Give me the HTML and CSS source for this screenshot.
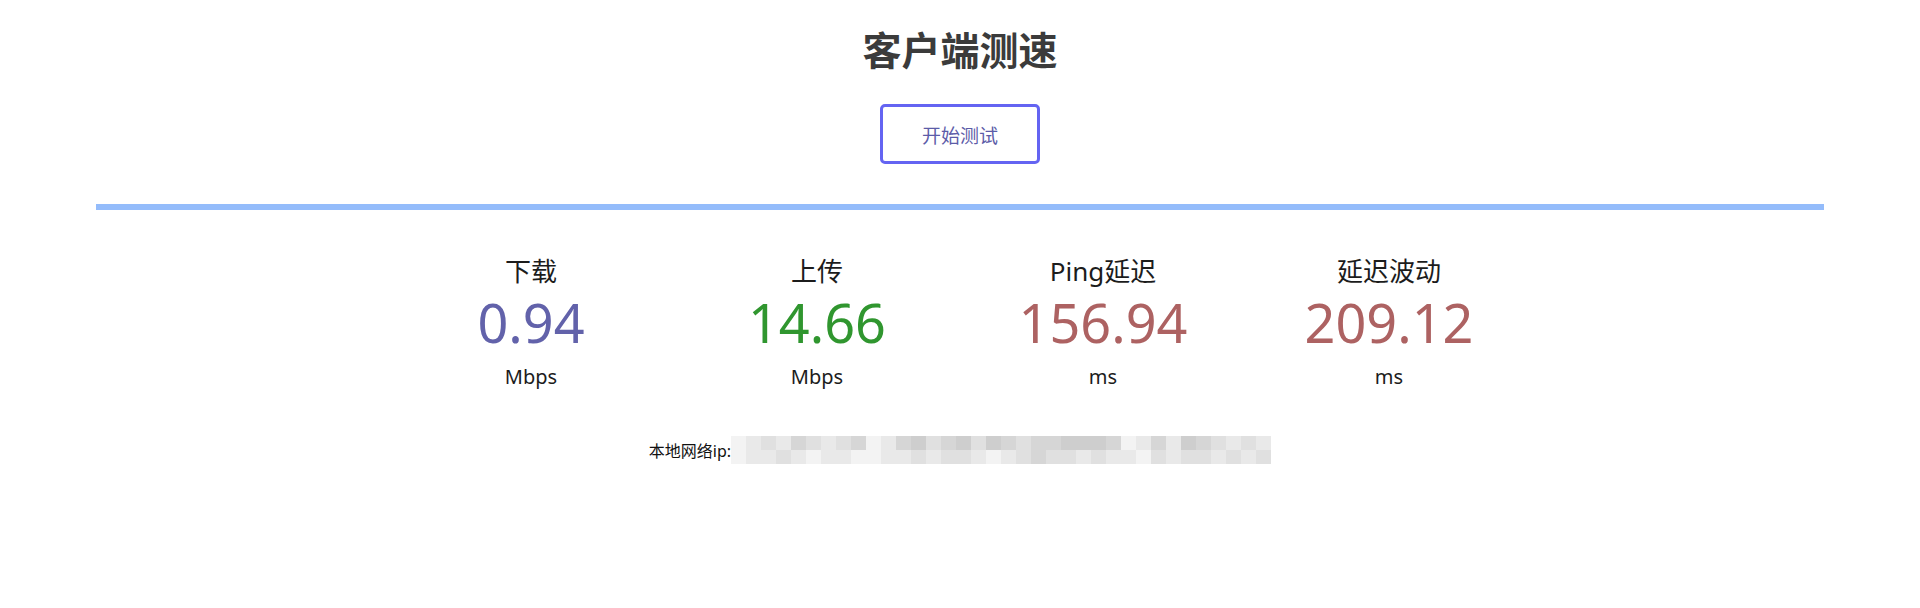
FILE: index.html
```html
<!DOCTYPE html>
<html>
<head>
    <meta charset="utf-8">
    <title>客户端测速</title>
    <link rel="stylesheet" href="styles.css">
</head>
<body>
    <div class="speed-page">
        <h1 class="title">客户端测速</h1>
        <button class="btn-start">开始测试</button>

        <div class="divider"></div>

        <div class="stats">
            <div class="stat">
                <div class="stat-label">下载</div>
                <div class="stat-value down">0.94</div>
                <div class="stat-unit">Mbps</div>
            </div>
            <div class="stat">
                <div class="stat-label">上传</div>
                <div class="stat-value up">14.66</div>
                <div class="stat-unit">Mbps</div>
            </div>
            <div class="stat">
                <div class="stat-label">Ping延迟</div>
                <div class="stat-value lag">156.94</div>
                <div class="stat-unit">ms</div>
            </div>
            <div class="stat">
                <div class="stat-label">延迟波动</div>
                <div class="stat-value lag">209.12</div>
                <div class="stat-unit">ms</div>
            </div>
        </div>

        <div class="ip-line">
            <span class="ip-text">本地网络ip:</span>
            <!-- redacted part of the address -->
            <span class="mosaic">
                <i class="m0"></i><i class="m1"></i><i class="m2"></i><i class="m1"></i><i class="m3"></i><i class="m2"></i><i class="m1"></i><i class="m2"></i><i class="m3"></i><i class="m0"></i><i class="m1"></i><i class="m3"></i><i class="m4"></i><i class="m2"></i><i class="m3"></i><i class="m4"></i><i class="m2"></i><i class="m4"></i><i class="m3"></i><i class="m2"></i><i class="m3"></i><i class="m3"></i><i class="m4"></i><i class="m4"></i><i class="m4"></i><i class="m3"></i><i class="m0"></i><i class="m1"></i><i class="m3"></i><i class="m1"></i><i class="m4"></i><i class="m3"></i><i class="m2"></i><i class="m1"></i><i class="m2"></i><i class="m1"></i>
                <i class="m0"></i><i class="m1"></i><i class="m1"></i><i class="m2"></i><i class="m1"></i><i class="m0"></i><i class="m1"></i><i class="m1"></i><i class="m0"></i><i class="m0"></i><i class="m1"></i><i class="m1"></i><i class="m2"></i><i class="m1"></i><i class="m2"></i><i class="m2"></i><i class="m1"></i><i class="m0"></i><i class="m1"></i><i class="m2"></i><i class="m3"></i><i class="m2"></i><i class="m2"></i><i class="m1"></i><i class="m2"></i><i class="m1"></i><i class="m1"></i><i class="m0"></i><i class="m2"></i><i class="m1"></i><i class="m2"></i><i class="m2"></i><i class="m1"></i><i class="m2"></i><i class="m1"></i><i class="m2"></i>
            </span>
        </div>
    </div>
</body>
</html>
```

FILE: styles.css
```css
body {
    margin: 0;
    background: #fff;
    font-family: "Noto Sans", "Noto Sans CJK SC", sans-serif;
    color: #1a1a1a;
}
.speed-page {
    display: flex;
    flex-direction: column;
    align-items: center;
    padding-top: 26px;
}
.title {
    margin: 0;
    font-size: 39px;
    line-height: 48px;
    font-weight: bold;
    color: #3b3b3b;
}
.btn-start {
    margin-top: 30px;
    width: 160px;
    height: 60px;
    background: #fff;
    border: 3px solid #6464f2;
    border-radius: 5px;
    font-family: "Noto Sans CJK SC", sans-serif;
    font-size: 19px;
    color: #5c5ca8;
    cursor: pointer;
}
.divider {
    margin-top: 40px;
    width: 90%;
    height: 6px;
    background: #94bcfb;
}
.stats {
    margin-top: 45px;
    display: grid;
    grid-template-columns: repeat(4, 286px);
}
.stat {
    display: flex;
    flex-direction: column;
    align-items: center;
}
.stat-label {
    font-size: 26px;
    line-height: 32px;
    color: #1c1c1c;
}
.stat-value {
    margin-top: 5px;
    font-size: 54px;
    line-height: 60px;
}
.stat-unit {
    margin-top: 13px;
    font-size: 20px;
    line-height: 24px;
    color: #1c1c1c;
}
.down { color: #6262aa; }
.up { color: #30962f; }
.lag { color: #ad6262; }
.ip-line {
    margin-top: 47px;
    display: flex;
    align-items: center;
    height: 28px;
}
.ip-text {
    font-size: 16px;
    color: #111;
}
.mosaic {
    display: flex;
    flex-wrap: wrap;
    width: 540px;
    height: 28px;
}
.mosaic i {
    display: block;
    width: 15px;
    height: 14px;
}
.m0 { background: #f3f3f3; }
.m1 { background: #e9e9e9; }
.m2 { background: #e0e0e0; }
.m3 { background: #d6d6d6; }
.m4 { background: #cecece; }
```
